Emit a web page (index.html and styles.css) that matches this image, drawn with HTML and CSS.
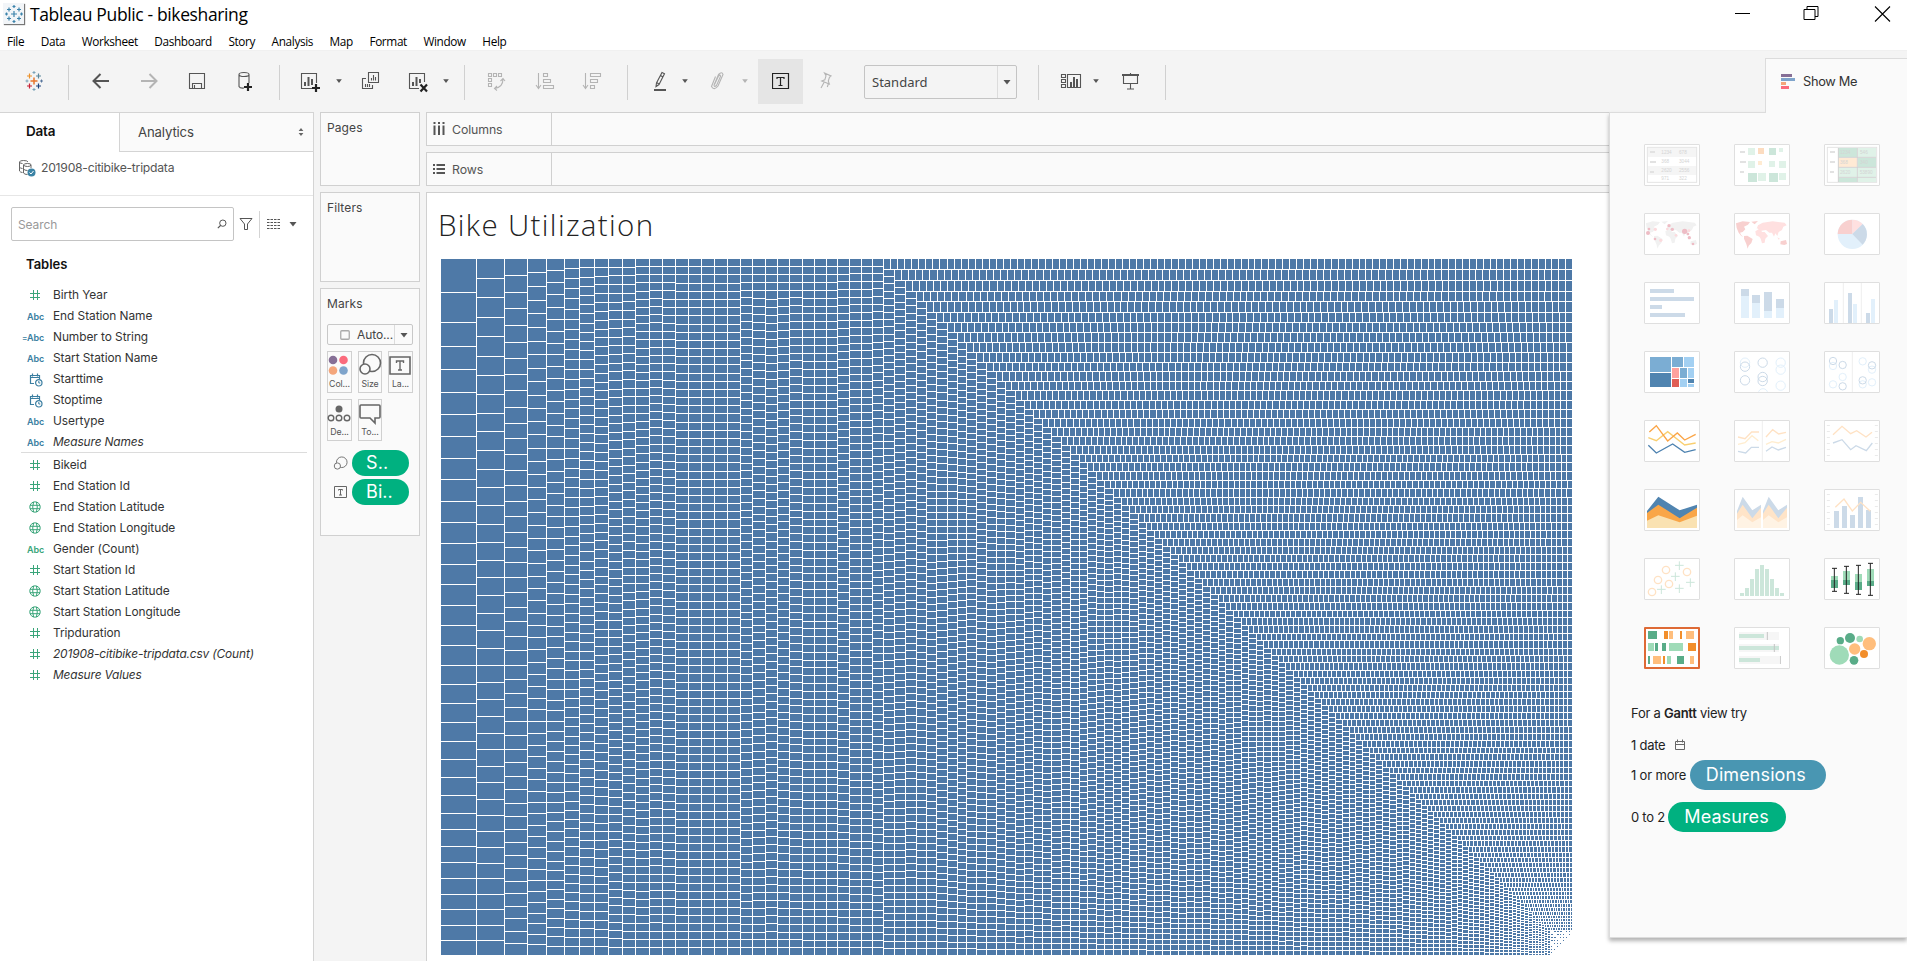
FILE: index.html
```html
<!DOCTYPE html>
<html lang="en">
<head>
<meta charset="utf-8">
<title>Tableau Public - bikesharing</title>
<link rel="stylesheet" href="styles.css">
</head>
<body>
<svg class="defs" width="0" height="0">
  <symbol id="num" viewBox="0 0 12 12"><path d="M4.5 1v10M8.5 1v10M1 4.5h10M1 8.5h10" stroke="currentColor" fill="none"/></symbol>
  <symbol id="globe" viewBox="0 0 12 12"><path d="M6 .8a5.2 5.2 0 1 0 0 10.4A5.2 5.2 0 1 0 6 .8M4.6 1Q2.8 6 4.6 11M7.4 1Q9.2 6 7.4 11M1 4.3h10M1 7.7h10" stroke="currentColor" fill="none"/></symbol>
  <symbol id="date" viewBox="0 0 14 14"><path d="M5 10.500H1.500v-8h9V6M1.500 4.500h9M3.500.5v3M8.500.5v3" stroke="currentColor" stroke-width="1.200" fill="none"/><circle cx="9.800" cy="9.800" r="3.200" stroke="currentColor" stroke-width="1.200" fill="none"/><path d="M9.800 8v2h1.500" stroke="currentColor" fill="none"/></symbol>
  <symbol id="caret" viewBox="0 0 8 8"><path d="M1.200 2.300h5.600L4 6z" fill="currentColor"/></symbol>
  <symbol id="bubbles" viewBox="0 0 24 24"><circle cx="14" cy="10" r="8.500" fill="none" stroke="currentColor" stroke-width="1.600"/><circle cx="7" cy="16" r="5" fill="#fafafa" stroke="currentColor" stroke-width="1.600"/></symbol>
</svg>

<header class="titlebar">
  <span class="appicon"><svg width="18" height="18" viewBox="0 0 18 18"><path d="M9 6v6M6 9h6M4 2.500v4M2 4.500h4M14 2.500v4M12 4.500h4M4 11.500v4M2 13.500h4M14 11.500v4M12 13.500h4M9 0v3M7.500 1.500h3M9 15v3M7.500 16.500h3M1.500 7.500v3M0 9h3M16.500 7.500v3M15 9h3" stroke="#3b83ab" stroke-width="1.200"/></svg></span>
  <span class="apptitle">Tableau Public - bikesharing</span>
  <svg class="winbtns" width="170" height="20" viewBox="0 0 170 20"><path d="M5 9.500h15" stroke="#000"/><path d="M74 5.500h11v10H74zM77 5.500v-3h11v10h-3" fill="none" stroke="#000"/><path d="M145 2.500l15 15M160 2.500l-15 15" stroke="#000" stroke-width="1.100"/></svg>
</header>
<nav class="menu"><span>File</span><span>Data</span><span>Worksheet</span><span>Dashboard</span><span>Story</span><span>Analysis</span><span>Map</span><span>Format</span><span>Window</span><span>Help</span></nav>

<div class="toolbar">
  <svg class="ic" viewBox="0 0 24 24"><path d="M12 8.500v7M8.500 12h7" stroke="#e8762d" stroke-width="1.500"/><path d="M7.500 4.500v5M5 7h5" stroke="#eb912b" stroke-width="1.200"/><path d="M16.500 4.500v5M14 7h5" stroke="#5b879b" stroke-width="1.200"/><path d="M7.500 14.500v5M5 17h5" stroke="#c72035" stroke-width="1.200"/><path d="M16.500 14.500v5M14 17h5" stroke="#1f447e" stroke-width="1.200"/><path d="M12 2v3M10.500 3.500h3M12 19v3M10.500 20.500h3M5 10.500v3M3.500 12h3" stroke="#7ba3b8"/><path d="M19.500 10.500v3M18 12h3" stroke="#59779e"/></svg>
  <i class="sep"></i>
  <svg class="ic" viewBox="0 0 24 24"><path d="M20 12H5M11.500 5L4.500 12l7 7" class="s2"/></svg>
  <svg class="ic dim" viewBox="0 0 24 24"><path d="M4 12h15M12.500 5l7 7-7 7" class="s2"/></svg>
  <svg class="ic" viewBox="0 0 24 24"><path d="M4.500 4.500h15v15h-15zM7.500 19.500v-5h9v5M9.500 19v-3" class="s1"/></svg>
  <svg class="ic" viewBox="0 0 24 24"><path d="M7 5.500v12q1 2 5 1.500M17 5.500V14M12 3.500c3 0 5 .9 5 2s-2 2-5 2-5-.9-5-2 2-2 5-2" class="s1"/><path d="M16 14v8M12 18h8" class="plus"/></svg>
  <i class="sep"></i>
  <svg class="ic" viewBox="0 0 24 24"><path d="M15 19.500H4.500v-15h15V14" class="s1"/><path d="M8 13v4M11.500 8v9M15 10v6" class="s2"/><path d="M19 15v8M15 19h8" class="plus"/></svg>
  <svg class="ct"><use href="#caret"/></svg>
  <svg class="ic" viewBox="0 0 24 24"><path d="M10.500 3.500h10v10h-10zM8 9.500H4.500v10h10V16" class="s1"/><path d="M13.500 9v2.500M15.500 6v5.500M17.500 8v3.500M7.500 15v3M9.500 15v3M11.500 15v3" class="s1"/></svg>
  <svg class="ic" viewBox="0 0 24 24"><path d="M14 19.500H4.500v-15h15V13" class="s1"/><path d="M8 13v4M11.500 8v9M15 10v4" class="s2"/><path d="M15.500 15.500l6.500 7M22 15.500l-6.500 7" class="plus"/></svg>
  <svg class="ct"><use href="#caret"/></svg>
  <i class="sep"></i>
  <svg class="ic dim" viewBox="0 0 24 24"><path d="M4.500 4.500h3v3h-3zM9.500 4.500h3v3h-3zM14.500 4.500h3v3h-3zM4.500 9.500h3v3h-3zM4.500 14.500h3v3h-3zM19 10q0 8-8 9.500M16.500 12l2.500-2.500 2 2.500M13 17l-2.500 2.500L13 21.500" class="s1"/></svg>
  <svg class="ic dim" viewBox="0 0 24 24"><path d="M5.500 4v15M3 16l2.500 3.500L8 16M10.500 4.500h4v3h-4zM10.500 10.500h7v3h-7zM10.500 16.500h10v3h-10z" class="s1"/></svg>
  <svg class="ic dim" viewBox="0 0 24 24"><path d="M5.500 4v15M3 16l2.500 3.500L8 16M10.500 4.500h10v3h-10zM10.500 10.500h7v3h-7zM10.500 16.500h4v3h-4z" class="s1"/></svg>
  <i class="sep"></i>
  <svg class="ic" viewBox="0 0 24 24"><path d="M14 3.500l2.500 1.200-5.500 10.800-3 2 .500-3.500zM12.500 6.500l2.500 1.500M8.500 13.500l2.500 1.500" class="s1"/><path d="M6 21h12" class="s2"/></svg>
  <svg class="ct"><use href="#caret"/></svg>
  <svg class="ic dim" viewBox="0 0 24 24"><path d="M9.500 15.500l4-8.500q2-2 2 .5l-4 9q-2.500 2-2.500-.5l4.500-10.500q3.500-3.500 4.500 0l-5 11.500q-4 5-6.500 .5l4-10" class="s1"/></svg>
  <svg class="ct dim"><use href="#caret"/></svg>
  <span class="tbtn"><svg width="18" height="18" viewBox="0 0 18 18"><path d="M.5 1.500h16v15H.5z" fill="none" stroke="#222" stroke-width="1.200"/><path d="M5 7V5.500h7V7M8.500 5.500v8M6.500 13.500h4" fill="none" stroke="#222" stroke-width="1.200"/></svg></span>
  <svg class="ic dim" viewBox="0 0 24 24"><path d="M11.500 4l6.500 3-1.500 1.200-1.200 3.800 1 3-7.500-3 3-1.200 1.200-4zM11 13.500L8 19M15.300 15l-1 3" class="s1"/></svg>
  <div class="fit"><span>Standard</span><b><svg class="big ct"><use href="#caret"/></svg></b></div>
  <i class="sep"></i>
  <svg class="ic" viewBox="0 0 24 24"><path d="M2.500 5.500h4v3h-4zM2.500 10.500h4v3h-4zM2.500 15.500h4v3h-4zM8.500 5.500h13v13h-13z" class="s1"/><path d="M12 13v5M15 8v10M18 10v8" class="s2"/></svg>
  <svg class="ct"><use href="#caret"/></svg>
  <svg class="ic" viewBox="0 0 24 24"><path d="M4 6h17" class="s2"/><path d="M12.500 4v2M5.500 6v8.500h14V6M12.500 14.500v5M9 20h7" class="s1"/></svg>
  <i class="sep"></i>
</div>

<main class="work">
  <aside class="data">
    <div class="tabs"><b class="tab-on">Data</b><span class="tab-off">Analytics<svg width="6" height="8" viewBox="0 0 7 10"><path d="M3.500 0L6.500 3.800H.5zM3.500 10L.5 6.200h6z" fill="#666"/></svg></span></div>
    <div class="source"><svg width="18" height="18" viewBox="0 0 18 18"><path d="M1.500 3v9q1 1.500 3 1.500M1.500 3q0-1.500 4-1.500T10 3M1.500 3q0 1.500 3 1.500M5.500 6v8q1 1.500 4 1.500M5.500 6q0-1.500 4-1.500T13 6t-3.500 1.500T5.500 6M13 6v3M5.500 10q1 1.500 4 1.500M1.500 8q1 1.500 3 1.500" fill="none" stroke="#666"/><circle cx="13.500" cy="13.500" r="4" fill="#3b83a5"/><path d="M11.500 13.500l1.500 1.500 2.500-3" fill="none" stroke="#fff"/></svg><span>201908-citibike-tripdata</span></div>
    <div class="find">
      <div class="search"><span>Search</span><svg width="10" height="10" viewBox="0 0 12 12"><circle cx="7" cy="5" r="3.800" fill="none" stroke="#555" stroke-width="1.200"/><path d="M4.500 7.500L1 11" stroke="#555" stroke-width="1.400"/></svg></div>
      <svg width="14" height="14" viewBox="0 0 14 14"><path d="M1 1.500h12L8.500 7v5.500h-3V7z" fill="none" stroke="#555"/></svg>
      <i></i>
      <svg class="rowsic" width="13" height="10" viewBox="0 0 13 10"><path d="M0 .5h13M0 3.500h13M0 6.500h13M0 9.500h13" stroke="#555" stroke-dasharray="2.500 1"/></svg>
      <svg class="big ct"><use href="#caret"/></svg>
    </div>
    <h2>Tables</h2>
    <ul class="fields blue">
      <li class="g"><svg><use href="#num"/></svg>Birth Year</li>
      <li><b>Abc</b>End Station Name</li>
      <li><b class="eq">Abc</b>Number to String</li>
      <li><b>Abc</b>Start Station Name</li>
      <li><svg class="dt"><use href="#date"/></svg>Starttime</li>
      <li><svg class="dt"><use href="#date"/></svg>Stoptime</li>
      <li><b>Abc</b>Usertype</li>
      <li><b>Abc</b><em>Measure Names</em></li>
    </ul>
    <ul class="fields measures">
      <li class="g"><svg><use href="#num"/></svg>Bikeid</li>
      <li class="g"><svg><use href="#num"/></svg>End Station Id</li>
      <li class="g"><svg><use href="#globe"/></svg>End Station Latitude</li>
      <li class="g"><svg><use href="#globe"/></svg>End Station Longitude</li>
      <li class="g"><b>Abc</b>Gender (Count)</li>
      <li class="g"><svg><use href="#num"/></svg>Start Station Id</li>
      <li class="g"><svg><use href="#globe"/></svg>Start Station Latitude</li>
      <li class="g"><svg><use href="#globe"/></svg>Start Station Longitude</li>
      <li class="g"><svg><use href="#num"/></svg>Tripduration</li>
      <li class="g"><svg><use href="#num"/></svg><em>201908-citibike-tripdata.csv (Count)</em></li>
      <li class="g"><svg><use href="#num"/></svg><em>Measure Values</em></li>
    </ul>
  </aside>

  <section class="cards">
    <div class="card pages">Pages</div>
    <div class="card filters">Filters</div>
    <div class="card marks">Marks
      <div class="mtype"><svg width="10" height="10" viewBox="0 0 10 10"><rect x=".75" y=".75" width="8.500" height="8.500" rx="1" fill="none" stroke="#aaa" stroke-width="1.300"/></svg><span>Auto...</span><b><svg class="big ct"><use href="#caret"/></svg></b></div>
      <div class="mgrid">
        <div><svg viewBox="0 0 24 24"><circle cx="6" cy="7" r="4.300" fill="#866f96"/><circle cx="16.500" cy="7" r="4.300" fill="#fb6b7c"/><circle cx="6" cy="17.500" r="4.300" fill="#f4a67b"/><circle cx="16.500" cy="17.500" r="4.300" fill="#7fa4cb"/></svg>Col...</div>
        <div><svg viewBox="0 0 24 24"><use href="#bubbles"/></svg>Size</div>
        <div><svg viewBox="0 0 24 24"><path d="M2 4h20v17H2z" fill="none" stroke="#666" stroke-width="1.600"/><path d="M8.500 10V8h7v2M12 8v9M10 17h4" fill="none" stroke="#666" stroke-width="1.400"/></svg>La...</div>
        <div><svg viewBox="0 0 24 24"><circle cx="12" cy="8" r="3.500" fill="#666"/><circle cx="4" cy="17" r="2.800" fill="none" stroke="#666" stroke-width="1.400"/><circle cx="12" cy="17" r="2.800" fill="none" stroke="#666" stroke-width="1.400"/><circle cx="20" cy="17" r="2.800" fill="none" stroke="#666" stroke-width="1.400"/></svg>De...</div>
        <div><svg viewBox="0 0 24 24"><path d="M3 4h18q1 0 1 1v11q0 1-1 1h-4v5l-5-5H3q-1 0-1-1V5q0-1 1-1z" fill="none" stroke="#666" stroke-width="1.600"/></svg>To...</div>
      </div>
      <div class="mpill"><svg width="15" height="15" viewBox="0 0 24 24"><use href="#bubbles"/></svg><span>S..</span></div>
      <div class="mpill"><svg width="15" height="14" viewBox="0 0 15 14"><path d="M1.500 1.500h12v11h-12zM5.500 5.500v-1h4v1M7.500 4.500V10M6 10h3" fill="none" stroke="#666"/></svg><span>Bi..</span></div>
    </div>
  </section>

  <section class="sheet">
    <div class="shelf"><span><svg width="12" height="14" viewBox="0 0 12 14"><path d="M1.500 0v2M6 0v2M10.500 0v2M1.500 3.500V13M6 3.500V13M10.500 3.500V13" stroke="#555" stroke-width="2"/></svg>Columns</span></div>
    <div class="shelf"><span><svg width="12" height="14" viewBox="0 0 12 14"><path d="M0 3h2M0 7h2M0 11h2M3.500 3H12M3.500 7H12M3.500 11H12" stroke="#555" stroke-width="2"/></svg>Rows</span></div>
    <div class="view">
      <h1>Bike Utilization</h1>
      <canvas id="treemap" width="1131" height="696"></canvas>
    </div>
  </section>
</main>

<div class="showtab"><svg width="14" height="16" viewBox="0 0 14 16"><path d="M0 1.500h11" stroke="#866f96" stroke-width="3"/><path d="M0 5.500h14" stroke="#7fa4cb" stroke-width="3"/><path d="M0 9.500h5" stroke="#f4a67b" stroke-width="3"/><path d="M0 13.500h8" stroke="#fb6b7c" stroke-width="3"/></svg>Show Me</div>
<aside class="showme">
  <div class="thumbs">
    <svg viewBox="135 45 162 120"><rect x="142" y="52" width="148" height="105" fill="#fff" stroke="#e4e4e4" stroke-width="3"/><path d="M144 54h144v27H144zM144 108h144v27H144z" fill="#f5f5f5"/><path d="M150 66h15M150 96h18M150 126h12" stroke="#e2e2e2" stroke-width="6"/><g class="tt"><text x="184" y="73">1234</text><text x="237" y="73">678</text><text x="184" y="100">368</text><text x="237" y="100">3044</text><text x="184" y="127">2620</text><text x="237" y="127">2556</text><text x="184" y="151">971</text><text x="237" y="151">322</text></g></svg>
    <svg viewBox="405 45 162 120"><path d="M420 66h15M420 96h18M420 126h12" stroke="#e2e2e2" stroke-width="6"/><path d="M444 54h21v21h-21zM537 54h12v12h-12zM444 93h21v21h-21zM507 93h18v18h-18zM537 93h21v21h-21zM474 129h24v24h-24zM537 129h21v21h-21z" fill="#e0f2e8"/><path d="M507 54h21v21h-21zM444 129h27v27h-27zM507 129h27v27h-27z" fill="#cce6da"/><path d="M474 54h18v18h-18z" fill="#fcdcc0"/><path d="M474 93h12v12h-12z" fill="#ffebd2"/></svg>
    <svg viewBox="675 45 162 120"><rect x="682" y="52" width="148" height="105" fill="#fff" stroke="#e4e4e4" stroke-width="3"/><path d="M714 54h57v27h-57zM774 84h54v27h-54zM714 144h57v12h-57z" fill="#cce6da"/><path d="M774 54h54v27h-54zM714 114h57v27h-57zM774 114h54v27h-54zM774 144h54v12h-54z" fill="#e0f2e8"/><path d="M714 84h57v27h-57z" fill="#ffead5"/><path d="M715 54v102M772 54v102M714 82h114M714 112h114M714 142h114" stroke="#d2d2d2" stroke-width="3"/><path d="M690 66h15M690 96h15M690 126h12" stroke="#e2e2e2" stroke-width="6"/><g class="tt"><text x="720" y="71">1234</text><text x="780" y="71">546</text><text x="720" y="103">368</text><text x="780" y="103">340</text><text x="720" y="133">2620</text><text x="779" y="133">53890</text></g></svg>
    <svg viewBox="135 252 162 120"><path d="M138 280l20-6 22 2-6 8-12 6 4 8-8 8-8 2 4 8 6 4-6-2-8-10-6-14zM184 275l20-2-10 10zM162 318l10-1 16 10-4 12-8 8-3 9-4-14-7-16zM200 296l4-10 14-8 30-4 36 4 6 8-10 4-4 10-10 6-4 12-6-8-4 10-6-12-8 0-10-8-14 2 2 4 8 0 10 12-8 8-2 12-8 2-4-14-4-6-10-4-2-12 10-6-6-4zM272 334l16-4 3 12-8 3-12-2zM262 322l8 4-4 3z" fill="#f1f1f1"/><g fill="#eebcc5"><circle cx="144" cy="309" r="6"/><circle cx="254" cy="304" r="8"/><circle cx="217" cy="298" r="5"/><circle cx="207" cy="287" r="5"/><circle cx="268" cy="323" r="5"/><circle cx="264" cy="312" r="4"/><circle cx="165" cy="327" r="4"/><circle cx="279" cy="342" r="4"/><circle cx="147" cy="297" r="4"/></g><g fill="#fcdadd"><circle cx="166" cy="298" r="5"/><circle cx="202" cy="297" r="4"/><circle cx="182" cy="331" r="5"/><circle cx="228" cy="316" r="4"/><circle cx="267" cy="302" r="4"/></g></svg>
    <svg viewBox="405 252 162 120"><path d="M408 280l20-6 22 2-6 8-12 6 4 8-8 8-8 2 4 8 6 4-6-2-8-10-6-14zM454 275l20-2-10 10zM432 318l10-1 16 10-4 12-8 8-3 9-4-14-7-16zM542 334l16-4 3 12-8 3-12-2z" fill="#f8d0cf"/><path d="M470 296l4-10 14-8 30-4 36 4 6 8-10 4-4 10-10 6-4 12-6-8-4 10-6-12-8 0-10-8-14 2 2 4 8 0 10 12-8 8-2 12-8 2-4-14-4-6-10-4-2-12 10-6-6-4zM532 322l8 4-4 3z" fill="#ffe0e0"/></svg>
    <svg viewBox="675 252 162 120"><circle cx="757" cy="313" r="44" fill="#e2f0fb"/><path d="M757 312V269a44 44 0 0 0-44 43z" fill="#f8d0cf"/><path d="M757 312V269a44 44 0 0 1 31 13z" fill="#ffe0e0"/><path d="M757 312l31-30a44 44 0 0 1 0 62z" fill="#ccdae8"/></svg>
    <svg viewBox="135 459 162 120"><path d="M150 477h72v12h-72zM150 501h132v12H150zM150 525h36v12h-36zM150 549h105v12H150z" fill="#ccdae8"/></svg>
    <svg viewBox="405 459 162 120"><path d="M423 498h24v66h-24zM456 519h24v45h-24zM492 543h24v21h-24zM528 534h24v30h-24z" fill="#e2f0fb"/><path d="M423 477h24v21h-24zM456 495h24v24h-24zM492 486h24v57h-24zM528 507h24v27h-24z" fill="#ccdae8"/></svg>
    <svg viewBox="675 459 162 120"><path d="M730 459v120M784 459v120" stroke="#eee" stroke-width="3"/><path d="M687 537h12v42h-12zM744 489h12v90h-12zM798 549h12v30h-12z" fill="#ccdae8"/><path d="M702 510h12v69h-12zM759 522h12v57h-12zM813 507h12v72h-12z" fill="#e2f0fb"/></svg>
    <svg viewBox="135 666 162 120"><path d="M150 681h63v45h-63zM216 681h33v30h-33zM240 714h21v30h-21z" fill="#7badd3"/><path d="M150 729h63v42h-63zM264 747h18v12h-18z" fill="#5084b0"/><path d="M252 681h30v30h-30zM264 714h18v30h-18zM240 747h21v24h-21zM264 762h18v9h-18z" fill="#a3d0f2"/><path d="M216 714h21v30h-21z" fill="#ffa19d"/><path d="M216 747h21v24h-21z" fill="#e05e55"/></svg>
    <svg viewBox="405 666 162 120"><g fill="none" stroke-width="3"><g stroke="#e2f0fb"><circle cx="435" cy="698" r="14"/><circle cx="542" cy="698" r="14"/><circle cx="542" cy="719" r="14"/><circle cx="542" cy="767" r="14"/><circle cx="489" cy="790" r="14"/></g><g stroke="#ccdae8"><circle cx="435" cy="710" r="14"/><circle cx="435" cy="751" r="14"/><circle cx="488" cy="698" r="14"/><circle cx="488" cy="741" r="14"/><circle cx="488" cy="753" r="14"/></g></g></svg>
    <svg viewBox="675 666 162 120"><path d="M757 666v120" stroke="#eee" stroke-width="3"/><g fill="none" stroke-width="3"><g stroke="#e2f0fb"><circle cx="699" cy="708" r="11"/><circle cx="728" cy="741" r="11"/><circle cx="699" cy="763" r="11"/><circle cx="788" cy="694" r="11"/><circle cx="816" cy="719" r="11"/><circle cx="788" cy="763" r="11"/><circle cx="816" cy="757" r="11"/></g><g stroke="#ccdae8"><circle cx="699" cy="693" r="11"/><circle cx="728" cy="705" r="11"/><circle cx="728" cy="769" r="11"/><circle cx="816" cy="706" r="11"/><circle cx="788" cy="751" r="11"/></g></g></svg>
    <svg viewBox="135 63 162 120"><g fill="none" stroke-width="4"><path d="M145 113l24 9 34-27 51 40 33-6" stroke="#f9cf70"/><path d="M148 96l21-19 34 46 29-24 22 21 33-17" stroke="#fba546"/><path d="M145 136l24 23 49-27 36 25 33-8" stroke="#4d82b0"/></g></svg>
    <svg viewBox="405 63 162 120"><path d="M487 63v120" stroke="#eee" stroke-width="3"/><g fill="none" stroke-width="4"><path d="M414 133l21-5 21-21 19 15M498 133l18-8 19 4 23-11" stroke="#ffedcf"/><path d="M414 111l21 5 20-20h22M498 111l20-22 18 13 22-5" stroke="#ffe2c4"/><path d="M414 154l23 5 17-17h23M498 154l18-13 19 9 23-8" stroke="#ccdae8"/></g></svg>
    <svg viewBox="675 63 162 120"><path d="M685 75v99M829 75v99" stroke="#eaeaea" stroke-width="9" stroke-dasharray="3 15"/><g fill="none" stroke-width="4"><path d="M699 104l27-25 26 22 18-9 28 19 18-14" stroke="#ffe2c4"/><path d="M699 129l27-10 26 30 16-12 31 15 18-23" stroke="#ccdae8"/></g></svg>
    <svg viewBox="135 270 162 120"><path d="M141 333l34-43 64 41 52-17v50H141z" fill="#5084b0"/><path d="M141 339l34-25 64 41 52-32v61H141z" fill="#f9a648"/><path d="M141 362l34-16 64 21 52-20v37H141z" fill="#fae2b2"/></svg>
    <svg viewBox="405 270 162 120"><path d="M411 333l17-43 29 41 26-17v50h-72zM489 333l17-43 29 41 26-17v50h-72z" fill="#ccdae8"/><path d="M411 341l17-27 29 41 26-32v50h-72zM489 341l17-27 29 41 26-32v50h-72z" fill="#ffe4c8"/><path d="M411 360l17-14 29 21 26-15v32h-72zM489 360l17-14 29 21 26-15v32h-72z" fill="#fff3e4"/></svg>
    <svg viewBox="675 270 162 120"><path d="M685 282v99M829 282v99" stroke="#eaeaea" stroke-width="9" stroke-dasharray="3 15"/><path d="M702 333h15v51h-15zM726 318h15v66h-15zM750 345h15v39h-15zM774 291h15v93h-15zM798 330h15v54h-15z" fill="#ccdae8"/><path d="M706 322l26-25 25 36 25-26 29 27" fill="none" stroke="#ffe2c4" stroke-width="4"/></svg>
    <svg viewBox="135 477 162 120"><g fill="none" stroke="#ffe2c4" stroke-width="4"><circle cx="198" cy="510" r="11"/><circle cx="261" cy="516" r="11"/><circle cx="174" cy="540" r="11"/><circle cx="207" cy="552" r="11"/><circle cx="156" cy="576" r="11"/></g><path d="M238 484v26M225 496h26M226 517v26M213 529h26M271 535v26M258 547h26M238 553v26M225 565h26M184 556v26M171 568h26" stroke="#cce6da" stroke-width="3"/></svg>
    <svg viewBox="405 477 162 120"><path d="M420 579h12v9h-12zM435 564h12v24h-12zM450 537h12v51h-12zM465 507h12v81h-12zM480 495h12v93h-12zM495 507h12v81h-12zM510 537h12v51h-12zM525 564h12v24h-12zM540 579h12v9h-12z" fill="#cce6da"/></svg>
    <svg viewBox="675 477 162 120"><path d="M693 528h21v12h-21zM729 513h21v27h-21zM765 522h21v24h-21zM801 507h21v36h-21z" fill="#9fdbb8"/><path d="M693 540h21v24h-21zM729 540h21v15h-21zM765 546h21v24h-21zM801 543h21v15h-21z" fill="#59ac88"/><path d="M703 505v69M696 505h15M696 574h15M739 499v81M732 499h15M732 580h15M775 496v87M768 496h15M768 583h15M811 490v96M804 490h15M804 586h15" stroke="#222" stroke-width="3"/></svg>
    <svg class="on" viewBox="138 687 156 114"><path d="M144 693h27v24h-27zM165 729h9v24h-9zM186 729h12v24h-12zM144 768h6v24h-6zM231 768h21v24h-21z" fill="#59ac88"/><path d="M144 729h18v24h-18zM207 729h42v24h-42zM201 768h12v24h-12z" fill="#9fdbb8"/><path d="M192 693h12v24h-12zM240 693h6v24h-6zM264 729h24v24h-24zM189 768h6v24h-6z" fill="#f28e2b"/><path d="M207 693h12v24h-12zM258 693h24v24h-24zM159 768h24v24h-24zM270 768h12v24h-12z" fill="#ffbe7d"/></svg>
    <svg viewBox="405 684 162 120"><path d="M417 696h120v24H417zM417 732h120v24H417zM417 768h120v24H417z" fill="#f6f6f6"/><path d="M417 702h75v12h-75zM417 738h120v12H417zM417 774h63v12h-63z" fill="#cce6da"/><path d="M502 696v24M523 732v24M541 768v24" stroke="#c4c4c4" stroke-width="3"/></svg>
    <svg viewBox="675 684 162 120"><g fill="#9fdbb8"><circle cx="718" cy="765" r="29"/><circle cx="779" cy="717" r="10"/></g><g fill="#59ac88"><circle cx="721" cy="722" r="11"/><circle cx="750" cy="714" r="15"/><circle cx="762" cy="781" r="13"/></g><g fill="#ffbe7d"><circle cx="808" cy="731" r="20"/><circle cx="764" cy="747" r="17"/></g><circle cx="792" cy="762" r="12" fill="#f28e2b"/></svg>
  </div>
  <p class="hint h1">For a <b>Gantt</b> view try</p>
  <p class="hint h2">1 date <svg width="12" height="12" viewBox="0 0 12 12"><path d="M1.500 2.500h9v8h-9zM1.500 5.500h9M3.500 .5v3M8.500 .5v3" fill="none" stroke="#666"/></svg></p>
  <p class="hint h3">1 or more <span class="pill dimn">Dimensions</span></p>
  <p class="hint h4">0 to 2 <span class="pill meas">Measures</span></p>
</aside>
<script src="treemap.js"></script>
</body>
</html>
```
FILE: styles.css
```css
* { box-sizing: border-box; }
html, body { margin: 0; height: 961px; overflow: hidden; }
body { width: 1907px; position: relative; display: flex; flex-direction: column; background: #f4f4f4; font-family: "Inter", "Liberation Sans", sans-serif; font-size: 12px; color: #333; }
.defs { position: absolute; }
svg { display: block; flex: none; }
h1, h2, ul, p { margin: 0; padding: 0; font-weight: normal; }
li { list-style: none; }

.titlebar { height: 30px; background: #fff; display: flex; align-items: center; padding-left: 3px; flex: none; }
.appicon { width: 21px; height: 21px; display: grid; place-items: center; background: #f2f5f8; box-shadow: 1px 1px 1px #777; margin-top: -3px; }
.apptitle { font-family: "Open Sans", sans-serif; font-size: 17.500px; letter-spacing: -.37px; color: #000; margin: -2px 0 0 6px; }
.winbtns { margin-left: auto; margin-right: 7px; margin-top: -3px; }
.menu { height: 21px; background: #fff; display: flex; gap: 16.500px; padding: 2px 0 0 7px; flex: none; font-family: "Open Sans", sans-serif; font-size: 11.800px; line-height: 19px; letter-spacing: -.36px; color: #000; border-bottom: 1px solid #f0f0f0; }

.toolbar { height: 61px; flex: none; padding: 0 0 1px 22px; display: grid; align-items: center; grid-template-columns: 46px 21px 48px 48px 47px 47px 18px 38px 23px 47px 37px 22px 20px 49px 47px 47px 21px 33px 24px 36px 17px 55px 51px 174px 21px 33px 26px 47px 1px; color: #555; }
.ic { width: 24px; height: 24px; }
.ct { width: 8px; height: 8px; color: #555; }
.ct.big { width: 10px; height: 10px; }
.dim, .ct.dim { color: #b4b4b4; }
.s1 { fill: none; stroke: currentColor; stroke-width: 1.1; }
.s2 { fill: none; stroke: currentColor; stroke-width: 2; }
.plus { fill: none; stroke: #222; stroke-width: 2.2; }
.sep { width: 1px; height: 35px; background: #d0d0d0; margin-top: 2px; }
.tbtn { width: 45px; height: 45px; background: #e5e5e5; display: grid; place-items: center; }
.fit { width: 153px; height: 34px; margin-top: 2px; border: 1px solid #c4c4c4; border-radius: 2px; display: flex; align-items: center; justify-content: space-between; padding-left: 7px; font-family: "Noto Sans", sans-serif; font-size: 13px; color: #444; }
.fit b { width: 19px; height: 32px; border-left: 1px solid #dcdcdc; display: grid; place-items: center; }

.work { flex: 1; display: flex; min-height: 0; }
.data { width: 314px; background: #fff; border-right: 1px solid #d4d4d4; border-top: 1px solid #d4d4d4; flex: none; }
.tabs { display: flex; height: 39px; }
.tab-on { width: 119px; padding: 10px 0 0 26px; font-size: 13.500px; letter-spacing: -.2px; font-weight: 600; color: #111; }
.tab-off { flex: 1; background: #fafafa; border: solid #d4d4d4; border-width: 0 0 1px 1px; padding: 0 9px 0 18px; display: flex; justify-content: space-between; align-items: center; font-size: 13.200px; letter-spacing: -.15px; color: #444; }
.source { height: 44px; padding: 0 0 12px 18px; display: flex; align-items: center; gap: 5px; border-bottom: 1px solid #e6e6e6; font-size: 12.200px; letter-spacing: -.25px; color: #555; }
.find { margin-top: 11px; padding-left: 11px; display: flex; align-items: center; height: 34px; gap: 6px; }
.find i { width: 1px; height: 27px; background: #d4d4d4; }
.search { width: 223px; height: 34px; border: 1px solid #c4c4c4; border-radius: 2px; display: flex; align-items: center; justify-content: space-between; padding: 0 6px 0 6px; color: #999; font-size: 12px; letter-spacing: -.1px; margin-right: -1px; }
.find .rowsic { margin-left: 1px; }
.find .ct { margin-left: 2px; }
h2 { font-size: 13px; font-weight: 600; color: #111; letter-spacing: 0; padding-left: 26px; line-height: 20px; margin: 13px 0 10px; }
.fields li { height: 21px; display: flex; align-items: center; padding-left: 53px; position: relative; font-size: 11.900px; letter-spacing: -.06px; white-space: nowrap; color: #333; }
.fields li svg, .fields li b { position: absolute; left: 27px; color: #3b7ea1; }
.fields li svg { left: 29px; width: 12px; height: 12px; }
.fields li svg.dt { width: 14px; height: 14px; top: 5px; }
.fields li em { letter-spacing: -.14px; }
.fields li b { font-size: 9px; font-weight: 600; top: 6px; line-height: 12px; letter-spacing: -.1px; }
.fields .g svg, .fields .g b { color: #3aa57a; }
.fields .eq::before { content: "="; position: absolute; left: -5px; font-size: 8px; }
.measures { border-top: 1px solid #dcdcdc; margin: 0 6px 0 21px; padding-top: 1px; }
.measures li { padding-left: 32px; }
.measures li svg { left: 8px; }
.measures li b { left: 6px; }

.cards { width: 100px; margin-left: 6px; flex: none; display: flex; flex-direction: column; gap: 6px; }
.card { border: 1px solid #d0d0d0; background: #fafafa; padding: 7px 6px; font-size: 12px; line-height: 15px; letter-spacing: .1px; color: #444; }
.pages { height: 74px; }
.filters { height: 90px; }
.marks { height: 248px; }
.mtype { margin-top: 13px; height: 21px; border: 1px solid #c8c8c8; border-radius: 2px; display: flex; align-items: center; padding-left: 12px; font-size: 12px; letter-spacing: -.1px; }
.mtype span { margin-left: 7px; flex: 1; white-space: nowrap; }
.mtype b { width: 18px; height: 19px; border-left: 1px solid #dcdcdc; display: grid; place-items: center; }
.mgrid { display: grid; grid-template-columns: 25px 24px 25px; gap: 6px; margin: 6px 0 9px; }
.mgrid div { height: 42px; border: 1px solid #d0d0d0; font-size: 8.800px; line-height: 12px; text-align: center; letter-spacing: -.1px; white-space: nowrap; color: #555; }
.mgrid svg { width: 24px; height: 24px; margin: 1px -1px 1px; color: #666; }
.mpill { display: flex; align-items: center; padding-left: 6px; gap: 4px; height: 26px; margin-bottom: 3px; color: #777; }
.mpill span { width: 57px; height: 26px; border-radius: 13px; background: #00b180; color: #fff; font-size: 18px; line-height: 26px; padding-left: 14px; }

.sheet { flex: 1; margin-left: 6px; display: flex; flex-direction: column; gap: 6px; }
.shelf { height: 34px; border: 1px solid #d0d0d0; background: #fafafa; flex: none; }
.shelf span { width: 125px; height: 32px; border-right: 1px solid #d0d0d0; display: flex; align-items: center; gap: 7px; padding-left: 6px; font-size: 12.300px; letter-spacing: -.1px; color: #555; }
.view { flex: 1; background: #fff; border: solid #d0d0d0; border-width: 1px 0 0 1px; padding-left: 14px; }
h1 { height: 66px; margin-left: -3px; padding-top: 11px; font-family: "Open Sans", sans-serif; font-weight: 300; font-size: 29.500px; line-height: 42px; color: #222; letter-spacing: 1.350px; }
canvas { display: block; }

.showtab { position: absolute; left: 1765px; top: 58px; width: 142px; height: 55px; z-index: 2; background: #fafafa; border: solid #dcdcdc; border-width: 1px 0 0 1px; display: flex; align-items: center; gap: 8px; padding: 0 0 9px 15px; font-size: 12.800px; letter-spacing: -.3px; color: #333; }
.showme { position: absolute; left: 1609px; top: 112px; width: 298px; height: 826px; background: #fafafa; border: 1px solid #dcdcdc; border-right: 0; box-shadow: 0 3px 4px rgba(0,0,0,.3); padding: 31px 0 0 34px; }
.thumbs { display: grid; grid-template-columns: repeat(3, 56px); column-gap: 34px; row-gap: 27px; }
.thumbs svg { width: 56px; height: 42px; border: 1px solid #dfdfdf; border-radius: 1px; background: #fff; }
.thumbs svg.on { border: 2px solid #de6a35; }
.tt { font: 14px "Liberation Sans", sans-serif; fill: #d4d4d4; }
.hint { margin-left: -13px; font-size: 13px; letter-spacing: -.25px; display: flex; align-items: center; white-space: pre; height: 30px; color: #222; }
.hint b { font-weight: 600; }
.hint svg { margin-left: 5px; }
.hint.h1 { margin-top: 29px; }
.hint.h2 { margin-top: 2px; }
.hint.h3 { margin-top: 0; letter-spacing: -.16px; }
.hint.h4 { margin-top: 12px; }
.pill { height: 30px; border-radius: 15px; line-height: 30px; color: #fff; font-size: 18px; letter-spacing: .1px; padding-left: 16px; }
.dimn { width: 136px; background: #4996b2; }
.meas { width: 118px; background: #00b180; }
```
FILE: treemap.js
```js
// Squarified treemap of bikes: full-height columns first, then alternating rows and columns.
const X0 = 441, Y0 = 259, X1 = 1572, Y1 = 955;
const ctx = document.getElementById('treemap').getContext('2d');
ctx.fillStyle = '#4e79a7';

function tile(x, y, w, h) {
  ctx.fillRect(x - X0, y - Y0, Math.max(1, w), Math.max(1, h));
}

// Splits a length into tiles whose pitch moves from p0 to p1; yields [start, end] pairs.
function split(a, b, p0, p1) {
  const n = Math.max(1, Math.round((b - a) / ((p0 + p1) / 2)));
  const steps = [];
  let total = 0;
  for (let i = 0; i < n; i++) {
    const s = p0 + (p1 - p0) * (n > 1 ? i / (n - 1) : 0);
    steps.push(s);
    total += s;
  }
  let pos = a;
  return steps.map(s => {
    const start = Math.round(pos);
    pos += s * (b - a) / total;
    return [start, Math.round(pos)];
  });
}

function column(x, xe, y, p0, p1) {
  for (const [a, b] of split(y, Y1 + 1, p0, p1)) tile(x, a, xe - x - 1, b - a - 1);
}
function row(y, ye, x, p0, p1) {
  for (const [a, b] of split(x, X1 + 1, p0, p1)) tile(a, y, b - a - 1, ye - y - 1);
}

const first = [259, 293, 323, 347, 370, 393, 415, 437, 459, 480, 502, 523, 544, 565, 585, 606, 626, 646, 666, 685, 704, 723, 742, 760, 778, 796, 814, 830, 847, 863, 879, 895, 910, 926, 941, 956];
for (let i = 0; i + 1 < first.length; i++) tile(441, first[i], 35, first[i + 1] - first[i] - 1);

const full = [[477, 19.6, 15], [505, 17, 12.2], [528, 13.9, 10.5], [547, 12.3, 9.3], [565, 10.2, 9], [580, 9.2, 8.8], [595, 8.8, 8.8], [609, 8.7, 8.2], [623, 8.7, 8.1], [636, 8.2, 8.1], [650, 8.1, 8.2], [663, 8.1, 8.1], [676, 8.2, 8], [689, 8.2, 8], [702, 8.2, 8], [715, 8.2, 8], [728, 8.2, 8], [741, 7.9, 7.8], [753, 8, 7.8], [766, 8.1, 7.9], [778, 8, 7.8], [790, 7.9, 7.8], [803, 7.9, 7.7], [815, 7.9, 7.7], [827, 7.9, 7.7], [838, 7.8, 7.7], [850, 7.7, 7.6], [862, 7.7, 7.6], [873, 7.6, 7.5], [884]];
for (let i = 0; i + 1 < full.length; i++) column(full[i][0], full[i + 1][0], Y0, full[i][1], full[i][2]);

// Corner of each alternating strip pair: [row top, row left].
const corners = [[259, 884], [270, 895], [281, 906], [292, 917], [302, 927], [313, 937], [323, 948], [333, 958], [343, 967], [353, 977], [363, 987], [372, 997], [382, 1006], [391, 1016], [401, 1025], [410, 1034], [419, 1043], [428, 1052], [437, 1062]];
const MID = 41;
for (let i = 0; i < MID; i++) {
  const t = i / MID, e = t * (1 + 0.14 * (1 - t));
  corners.push([Math.round(446 + 315 * e), Math.round(1071 + 312 * e)]);
}
corners.push([761, 1383], [768, 1390], [774, 1397], [781, 1403], [787, 1410], [794, 1416], [800, 1422], [806, 1428], [812, 1434], [818, 1440], [824, 1446], [830, 1452], [836, 1458], [841, 1463], [847, 1469], [853, 1474], [858, 1480], [863, 1485], [868, 1490], [873, 1495], [878, 1500], [883, 1504], [888, 1509], [892, 1513], [896, 1517], [900, 1521], [904, 1525], [908, 1529], [912, 1533], [916, 1536], [919, 1539], [922, 1542], [925, 1545], [928, 1548], [931, 1551]);

// Strip thickness averaged over neighbours, so the pitch shrinks smoothly.
function thickness(i) {
  const a = Math.max(0, i - 3), b = Math.min(corners.length - 1, i + 4);
  return (corners[b][0] - corners[a][0]) / (b - a);
}
for (let i = 0; i + 1 < corners.length; i++) {
  const [y, x] = corners[i], [yn, xn] = corners[i + 1];
  const p = Math.max(2.4, Math.min(7, thickness(i) * 0.665));
  row(y, yn, x, p * 1.01, p * 0.98);
  column(x, xn, yn, p * 1.03, p);
}
// Smallest bikes thin out toward the corner.
for (let r = 0; r < 8; r++) {
  for (let c = 0; c < 8; c++) {
    if (r + c < 8 && (r * 5 + c * 3) % 4 !== 0) tile(1551 + c * 3, 931 + r * 3, r + c < 4 ? 2 : 1, 1);
  }
}
```
